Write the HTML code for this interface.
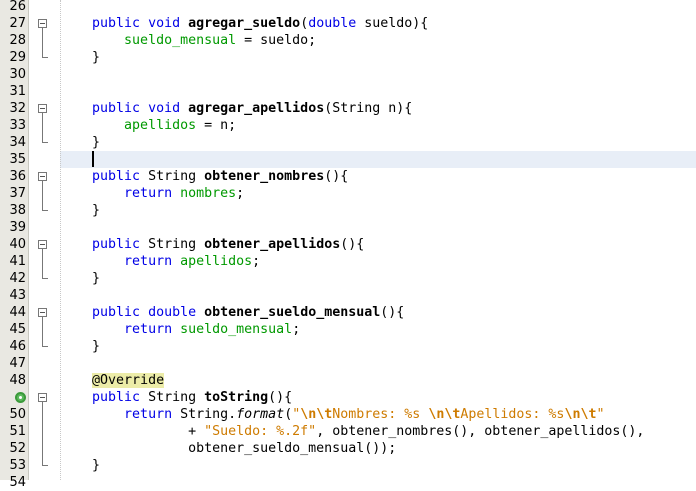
<!DOCTYPE html>
<html><head><meta charset="utf-8"><style>
body{margin:0;width:696px;height:480px;overflow:hidden;background:#fff;position:relative;font-family:"DejaVu Sans Mono","Liberation Mono",monospace;font-size:13.3px}
#g{position:absolute;left:0;top:0;width:28px;height:480px;background:#e9e8e2;border-right:1px solid #c8c8c0}
#dl{position:absolute;left:60px;top:0;height:480px;border-left:1px dotted #c8c8c8}
#hl{position:absolute;left:60px;top:151px;width:636px;height:17px;background:#e8eef7}
.n{position:absolute;left:0;width:26px;text-align:right;line-height:17px;color:#000;font-family:"DejaVu Sans",sans-serif;font-size:13px}
pre{position:absolute;left:60px;top:-2px;margin:0;font:inherit;line-height:17px;color:#000}
.k{color:#0000e6}.f{color:#009900}.s{color:#ce7b00}.b{font-weight:bold}.i{font-style:italic}
.a{background:#ececa8}
.box{position:absolute;left:38px;width:9px;height:9px;border:1px solid #777;background:#fff;box-sizing:border-box}
.box:after{content:"";position:absolute;left:1px;top:3px;width:5px;height:1px;background:#555}
.vl{position:absolute;left:42px;width:5px;border-left:1px solid #777;border-bottom:1px solid #777}
#cur{position:absolute;left:92px;top:151px;width:2px;height:16px;background:#000}
</style></head><body>
<div id="g"></div><div id="hl"></div><div id="dl"></div><div id="cur"></div>
<div id="nums"></div>
<pre>

    <span class="k">public void</span> <span class="b">agregar_sueldo</span>(<span class="k">double</span> sueldo){
        <span class="f">sueldo_mensual</span> = sueldo;
    }


    <span class="k">public void</span> <span class="b">agregar_apellidos</span>(String n){
        <span class="f">apellidos</span> = n;
    }

    <span class="k">public</span> String <span class="b">obtener_nombres</span>(){
        <span class="k">return</span> <span class="f">nombres</span>;
    }

    <span class="k">public</span> String <span class="b">obtener_apellidos</span>(){
        <span class="k">return</span> <span class="f">apellidos</span>;
    }

    <span class="k">public double</span> <span class="b">obtener_sueldo_mensual</span>(){
        <span class="k">return</span> <span class="f">sueldo_mensual</span>;
    }

    <span class="a">@Override</span>
    <span class="k">public</span> String <span class="b">toString</span>(){
        <span class="k">return</span> String.<span class="i">format</span>(<span class="s">"<b>\n\t</b>Nombres: %s <b>\n\t</b>Apellidos: %s<b>\n\t</b>"</span>
                + <span class="s">"Sueldo: %.2f"</span>, obtener_nombres(), obtener_apellidos(),
                obtener_sueldo_mensual());
    }
</pre>
<script>
var h='';
for(var i=26;i<=54;i++){var t=-2+(i-26)*17;
if(i==49){h+='<div style="position:absolute;left:15px;top:'+(t+3)+'px;width:11px;height:11px;border-radius:50%;background:#5cb85c;box-sizing:border-box;border:2px solid #3a9a3a"><div style="position:absolute;left:2px;top:2px;width:3px;height:3px;border-radius:50%;background:#fff"></div></div>';continue;}
h+='<div class="n" style="top:'+t+'px">'+i+'</div>';}
[[27,29],[32,34],[36,38],[40,42],[44,46],[49,53]].forEach(function(r){
var a=-2+(r[0]-26)*17+4,b=-2+(r[1]-26)*17+8;
h+='<div class="box" style="top:'+a+'px"></div><div class="vl" style="top:'+(a+9)+'px;height:'+(b-a-9)+'px"></div>';});
document.getElementById('nums').innerHTML=h;
</script>
</body></html>
